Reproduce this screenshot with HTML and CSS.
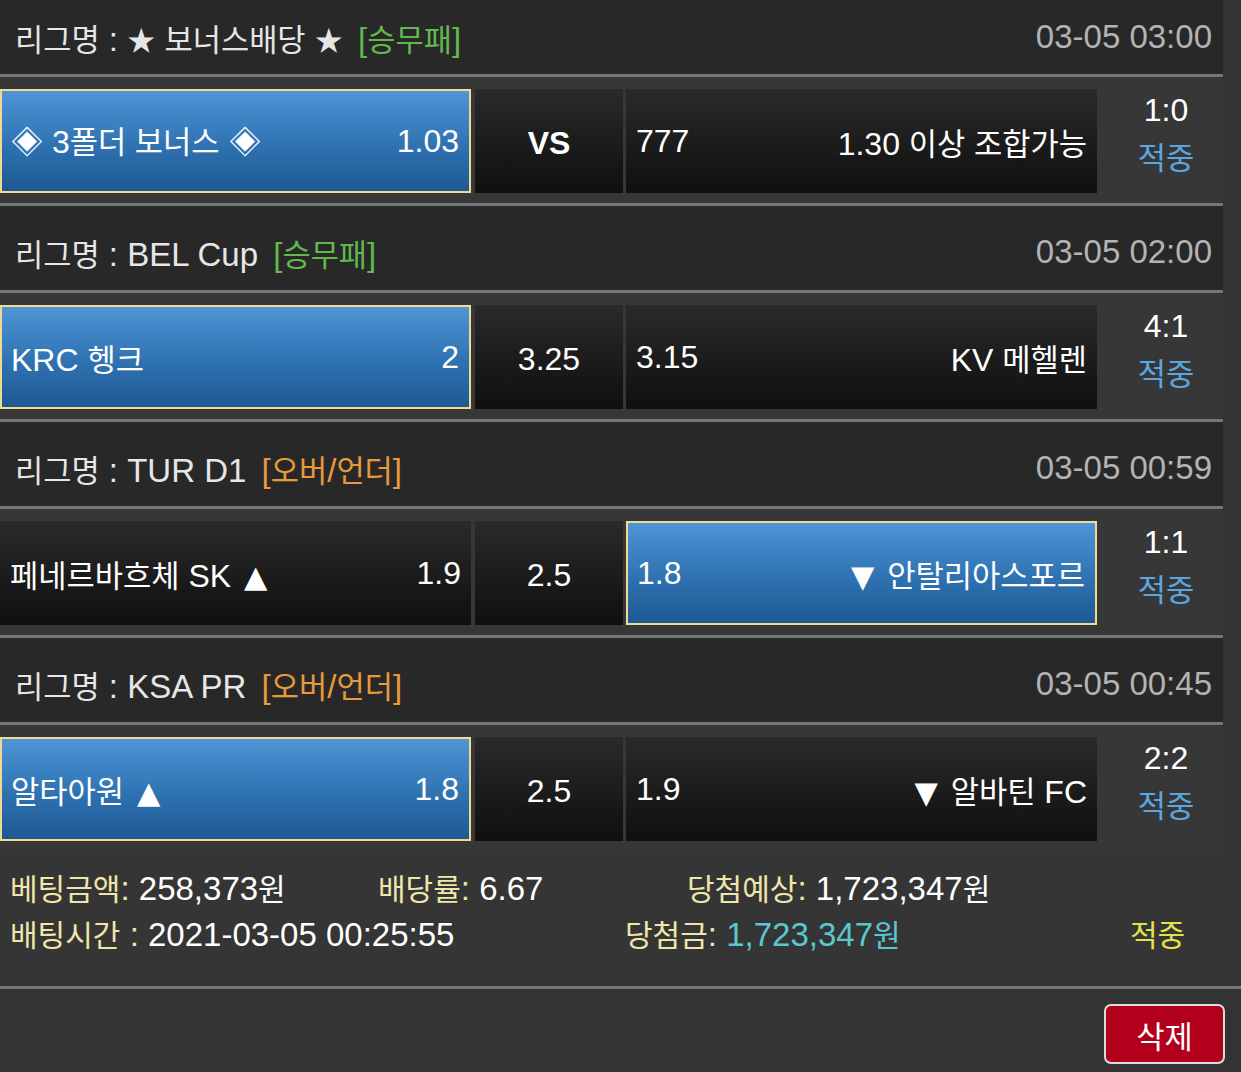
FILE: index.html
```html
<!DOCTYPE html>
<html lang="ko">
<head>
<meta charset="utf-8">
<title>Bet slip</title>
<link rel="stylesheet" href="styles.css">
</head>
<body>
<div class="list">
  <div class="league first">
    <div class="lname"><span class="ko">리그명</span> : <span class="star">★</span> <span class="ko">보너스배당</span> <span class="star">★</span> <span class="tag green">[<span class="ko">승무패</span>]</span></div>
    <div class="ltime">03-05 03:00</div>
  </div>
  <div class="match">
    <div class="cell side sel"><span>◈ 3<span class="ko">폴더 보너스</span> ◈</span><span>1.03</span></div>
    <div class="cell mid vs">VS</div>
    <div class="cell side"><span>777</span><span>1.30 <span class="ko">이상 조합가능</span></span></div>
    <div class="score"><div>1:0</div><div class="hit"><span class="ko">적중</span></div></div>
  </div>

  <div class="league">
    <div class="lname"><span class="ko">리그명</span> : BEL Cup <span class="tag green">[<span class="ko">승무패</span>]</span></div>
    <div class="ltime">03-05 02:00</div>
  </div>
  <div class="match">
    <div class="cell side sel"><span>KRC <span class="ko">헹크</span></span><span>2</span></div>
    <div class="cell mid">3.25</div>
    <div class="cell side"><span>3.15</span><span>KV <span class="ko">메헬렌</span></span></div>
    <div class="score"><div>4:1</div><div class="hit"><span class="ko">적중</span></div></div>
  </div>

  <div class="league">
    <div class="lname"><span class="ko">리그명</span> : TUR D1 <span class="tag orange">[<span class="ko">오버</span>/<span class="ko">언더</span>]</span></div>
    <div class="ltime">03-05 00:59</div>
  </div>
  <div class="match">
    <div class="cell side"><span><span class="ko">페네르바흐체</span> SK <span class="tri">▲</span></span><span>1.9</span></div>
    <div class="cell mid">2.5</div>
    <div class="cell side sel"><span>1.8</span><span><span class="tri">▼</span> <span class="ko">안탈리아스포르</span></span></div>
    <div class="score"><div>1:1</div><div class="hit"><span class="ko">적중</span></div></div>
  </div>

  <div class="league">
    <div class="lname"><span class="ko">리그명</span> : KSA PR <span class="tag orange">[<span class="ko">오버</span>/<span class="ko">언더</span>]</span></div>
    <div class="ltime">03-05 00:45</div>
  </div>
  <div class="match last">
    <div class="cell side sel"><span><span class="ko">알타아원</span> <span class="tri">▲</span></span><span>1.8</span></div>
    <div class="cell mid">2.5</div>
    <div class="cell side"><span>1.9</span><span><span class="tri">▼</span> <span class="ko">알바틴</span> FC</span></div>
    <div class="score"><div>2:2</div><div class="hit"><span class="ko">적중</span></div></div>
  </div>
</div>

<div class="summary">
  <div class="srow">
    <div class="s1"><span class="lbl"><span class="ko">베팅금액</span>:</span> 258,373<span class="ko">원</span></div>
    <div class="s2"><span class="lbl"><span class="ko">배당률</span>:</span> 6.67</div>
    <div class="s3"><span class="lbl"><span class="ko">당첨예상</span>:</span> 1,723,347<span class="ko">원</span></div>
  </div>
  <div class="srow">
    <div class="t1"><span class="lbl"><span class="ko">배팅시간</span> :</span> 2021-03-05 00:25:55</div>
    <div class="t2"><span class="lbl"><span class="ko">당첨금</span>:</span> <span class="win">1,723,347<span class="ko">원</span></span></div>
    <div class="t3"><span class="ko">적중</span></div>
  </div>
</div>

<div class="actions">
  <button class="del"><span class="ko">삭제</span></button>
</div>
</body>
</html>
```

FILE: styles.css
```css
html, body {
  margin: 0;
  padding: 0;
}
body {
  background: #333333;
  font-family: "Liberation Sans", "Noto Sans CJK KR", sans-serif;
  font-size: 32px;
  color: #ffffff;
  width: 1241px;
  height: 1072px;
  overflow: hidden;
}
.ko {
  font-family: "Noto Sans CJK KR", sans-serif;
  font-size: 0.96em;
}
.tri {
  font-family: "DejaVu Sans", sans-serif;
  font-size: 0.95em;
  margin: 0 4px;
}
.star {
  font-family: "Noto Sans CJK KR", sans-serif;
  font-size: 0.85em;
}
.list {
  width: 1223px;
}
.league {
  box-sizing: border-box;
  height: 87px;
  padding: 8px 11px 0 15px;
  background: #282828;
  border-bottom: 3px solid #767676;
  display: flex;
  align-items: center;
  justify-content: space-between;
  color: #e6e6e6;
  font-size: 33px;
}
.league .ko {
  font-size: 0.93em;
}
.league.first {
  height: 77px;
  padding-top: 0;
}
.lname {
  white-space: nowrap;
}
.tag {
  margin-left: 6px;
}
.green { color: #62b84f; }
.orange { color: #e69a3c; }
.ltime {
  color: #b3b3b3;
}
.match {
  background: #373737;
  padding: 12px 0 10px;
  display: flex;
  align-items: stretch;
  border-bottom: 3px solid #767676;
}
.match.last {
  border-bottom: none;
}
.cell {
  box-sizing: border-box;
  height: 104px;
  background: linear-gradient(#2a2a2a, #0f0f0f);
  display: flex;
  align-items: center;
}
.side {
  width: 471px;
  justify-content: space-between;
  padding: 0 10px 0 10px;
  white-space: nowrap;
}
.mid {
  width: 148px;
  margin: 0 3px 0 4px;
  justify-content: center;
  padding-top: 5px;
}
.vs {
  font-weight: bold;
}
.sel {
  border: 2px solid #f0d993;
  background: linear-gradient(#4d95d6, #2f72b2 55%, #1d5892);
  padding: 0 10px 0 9px;
}
.score {
  flex: 1;
  text-align: center;
  padding-left: 12px;
  line-height: 46px;
  margin-top: -2px;
}
.hit {
  color: #5ba7e0;
}
.summary {
  background: #353535;
  padding: 14px 0 29px 10px;
  border-bottom: 3px solid #767676;
  line-height: 45px;
  font-size: 33px;
}
.summary .ko {
  font-size: 0.91em;
}
.srow {
  display: flex;
  white-space: nowrap;
}
.lbl {
  color: #efe6a9;
}
.s1 { width: 368px; }
.s2 { width: 309px; }
.t1 { width: 615px; }
.t2 { width: 505px; }
.t3 { color: #e4e24a; }
.win { color: #58c9d0; }
.actions {
  display: flex;
  justify-content: flex-end;
  padding: 15px 16px 0 0;
}
.del {
  width: 121px;
  height: 60px;
  background: #b2001c;
  border: 2px solid #dcdcdc;
  border-radius: 7px;
  color: #ffffff;
  font-family: "Liberation Sans", "Noto Sans CJK KR", sans-serif;
  font-size: 32px;
  padding: 0;
}
```
